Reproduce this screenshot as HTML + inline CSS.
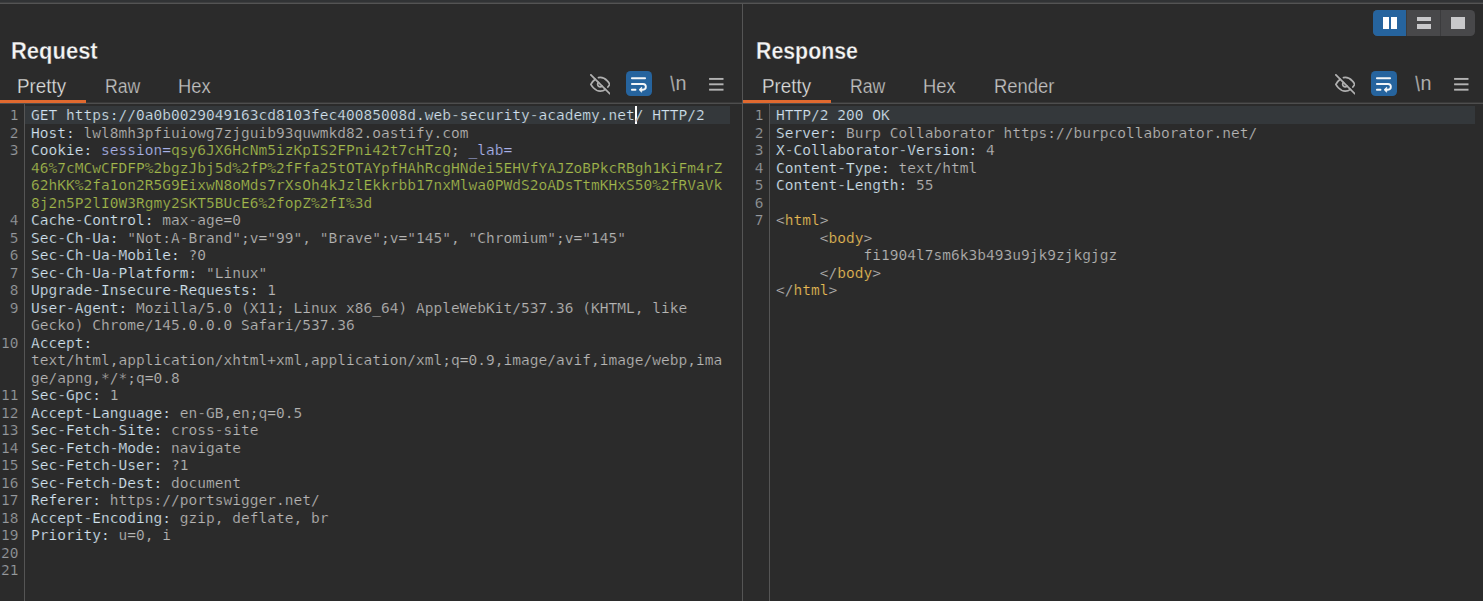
<!DOCTYPE html>
<html lang="en">
<head>
<meta charset="utf-8">
<title>Request / Response</title>
<style>
html,body{margin:0;padding:0;}
body{width:1483px;height:601px;overflow:hidden;background:#2b2b2b;position:relative;}
.abs{position:absolute;}
.sans{font-family:"Liberation Sans", "DejaVu Sans", sans-serif;}
.row,.ln{position:absolute;font-family:"DejaVu Sans Mono", "Liberation Mono", monospace;font-size:14.5px;line-height:17.5px;height:17.5px;white-space:pre;letter-spacing:0.0203px;-webkit-text-stroke:0.22px #2b2b2b;}
.ln{width:40px;text-align:right;color:#979a9e;}
.u{-webkit-text-stroke:0;}
.n{color:#d2e2ef;}
.v{color:#b7b6b5;}
.p{color:#a9b2e8;}
.g{color:#a2b84c;}
.t{color:#e8bb55;}
.title{font-weight:bold;font-size:23px;line-height:26px;color:#f4f4f4;top:38.4px;transform-origin:0 0;transform:scaleX(0.955);-webkit-text-stroke:0.3px #2b2b2b;}
.tab{font-size:19.5px;line-height:24px;color:#c2c2c2;top:73.6px;transform-origin:0 0;-webkit-text-stroke:0.25px #2b2b2b;}
.tab.sel{color:#dedede;}
</style>
</head>
<body>
<!-- top strip -->
<div class="abs" style="left:0;top:0;width:1483px;height:2px;background:#313335"></div>
<div class="abs" style="left:0;top:2px;width:1483px;height:1px;background:#3e3f40"></div>
<div class="abs" style="left:0;top:3px;width:1483px;height:1px;background:#545454"></div>
<!-- pane divider -->
<div class="abs" style="left:742px;top:3px;width:1px;height:598px;background:#555555"></div>

<!-- layout switcher -->
<div class="abs" style="left:1373px;top:10px;width:101.5px;height:26px;border-radius:4.5px;background:#48484a;overflow:hidden">
  <div class="abs" style="left:0;top:0;width:33px;height:26px;background:#26649e"></div>
  <div class="abs" style="left:33px;top:0;width:1.1px;height:26px;background:#3b3b3d"></div>
  <div class="abs" style="left:66.7px;top:0;width:1.1px;height:26px;background:#3b3b3d"></div>
  <div class="abs" style="left:9.9px;top:6.6px;width:5.9px;height:12.1px;background:#ffffff"></div>
  <div class="abs" style="left:18.4px;top:6.6px;width:5.8px;height:12.1px;background:#ffffff"></div>
  <div class="abs" style="left:43.8px;top:6.9px;width:14.2px;height:4.2px;background:#c8c8ca"></div>
  <div class="abs" style="left:43.8px;top:14.3px;width:14.2px;height:4.4px;background:#c8c8ca"></div>
  <div class="abs" style="left:77.8px;top:6.7px;width:14px;height:12px;background:#c8c8ca"></div>
</div>

<!-- REQUEST pane -->
<div class="abs sans title" style="left:11px">Request</div>
<div class="abs sans tab sel" style="left:17px;transform:scaleX(0.965)">Pretty</div>
<div class="abs sans tab" style="left:105px;transform:scaleX(0.905)">Raw</div>
<div class="abs sans tab" style="left:178px;transform:scaleX(0.94)">Hex</div>
<div class="abs" style="left:0;top:100px;width:86px;height:3px;background:#e0692f"></div>

<svg class="abs" style="left:589.7px;top:74.2px" width="20.6" height="20.6" viewBox="0 0 24 24" fill="none" stroke="#b0b0b0" stroke-width="2.05" stroke-linecap="round" stroke-linejoin="round">
  <path d="M17.94 17.94A10.07 10.07 0 0 1 12 20c-7 0-11-8-11-8a18.45 18.45 0 0 1 5.06-5.94M9.9 4.24A9.12 9.12 0 0 1 12 4c7 0 11 8 11 8a18.5 18.5 0 0 1-2.16 3.19m-6.72-1.07a3 3 0 1 1-4.24-4.24"/>
  <path d="M1 1 L23 23"/>
</svg>
<div class="abs" style="left:626px;top:71px;width:26px;height:25px;border-radius:4.5px;background:#26649e"></div>
<svg class="abs" style="left:626px;top:71px" width="26" height="25" viewBox="626 71 26 25" fill="none" stroke="#f4f6f8" stroke-width="1.9" stroke-linecap="round" stroke-linejoin="round">
  <path d="M631.9 78.3 H645.1"/>
  <path d="M631.9 84 H643 A2.85 2.85 0 0 1 643 89.7 H641"/>
  <path d="M631.9 89.7 H635.5"/>
  <path d="M641.4 87.5 L639.1 89.7 L641.4 91.9 Z" fill="#f4f6f8" stroke-width="0.9"/>
</svg>
<svg class="abs sans" style="left:666px;top:70px" width="26" height="28" viewBox="666 70 26 28">
  <text transform="translate(670.4 90.6) scale(0.74 1)" font-size="19.9" fill="#adadad" stroke="#adadad" stroke-width="0.5">\</text>
  <text transform="translate(675.6 90.1) scale(0.97 1)" font-size="20.4" fill="#adadad">n</text>
</svg>
<svg class="abs" style="left:706px;top:74px" width="22" height="20" viewBox="706 74 22 20" fill="#b3b3b3">
  <rect x="709.1" y="77.95" width="14.4" height="1.9"/>
  <rect x="709.1" y="83.35" width="14.4" height="1.9"/>
  <rect x="709.1" y="88.75" width="14.4" height="1.9"/>
</svg>

<div class="abs" style="left:86px;top:102px;width:656px;height:1px;background:#393939"></div>
<div class="abs" style="left:0;top:103px;width:742px;height:1px;background:#4e4e4e"></div>
<div class="abs" style="left:24px;top:104px;width:1px;height:497px;background:#555555"></div>
<div class="abs" style="left:25px;top:106px;width:704.5px;height:18px;background:#34383b"></div>
<div class="abs" style="left:635px;top:106px;width:2px;height:18px;background:#ffffff"></div>
<div class="ln" style="top:107px;left:-21.5px">1</div>
<div class="row" style="top:107px;left:31px"><span class="n">GET https://0a0b0029049163cd8103fec40085008d.web-security-academy.net/ HTTP/2</span></div>
<div class="ln" style="top:124.5px;left:-21.5px">2</div>
<div class="row" style="top:124.5px;left:31px"><span class="n">Host:</span><span class="v"> lwl8mh3pfiuiowg7zjguib93quwmkd82.oastify.com</span></div>
<div class="ln" style="top:142px;left:-21.5px">3</div>
<div class="row" style="top:142px;left:31px"><span class="n">Cookie:</span><span class="v"> </span><span class="p">session=</span><span class="g">qsy6JX6HcNm5izKpIS2FPni42t7cHTzQ</span><span class="v">; </span><span class="p"><span class="u">_</span>lab=</span></div>
<div class="row" style="top:159.5px;left:31px"><span class="g">46%7cMCwCFDFP%2bgzJbj5d%2fP%2fFfa25tOTAYpfHAhRcgHNdei5EHVfYAJZoBPkcRBgh1KiFm4rZ</span></div>
<div class="row" style="top:177px;left:31px"><span class="g">62hKK%2fa1on2R5G9EixwN8oMds7rXsOh4kJzlEkkrbb17nxMlwa0PWdS2oADsTtmKHxS50%2fRVaVk</span></div>
<div class="row" style="top:194.5px;left:31px"><span class="g">8j2n5P2lI0W3Rgmy2SKT5BUcE6%2fopZ%2fI%3d</span></div>
<div class="ln" style="top:212px;left:-21.5px">4</div>
<div class="row" style="top:212px;left:31px"><span class="n">Cache-Control:</span><span class="v"> max-age=0</span></div>
<div class="ln" style="top:229.5px;left:-21.5px">5</div>
<div class="row" style="top:229.5px;left:31px"><span class="n">Sec-Ch-Ua:</span><span class="v"> "Not:A-Brand";v="99", "Brave";v="145", "Chromium";v="145"</span></div>
<div class="ln" style="top:247px;left:-21.5px">6</div>
<div class="row" style="top:247px;left:31px"><span class="n">Sec-Ch-Ua-Mobile:</span><span class="v"> ?0</span></div>
<div class="ln" style="top:264.5px;left:-21.5px">7</div>
<div class="row" style="top:264.5px;left:31px"><span class="n">Sec-Ch-Ua-Platform:</span><span class="v"> "Linux"</span></div>
<div class="ln" style="top:282px;left:-21.5px">8</div>
<div class="row" style="top:282px;left:31px"><span class="n">Upgrade-Insecure-Requests:</span><span class="v"> 1</span></div>
<div class="ln" style="top:299.5px;left:-21.5px">9</div>
<div class="row" style="top:299.5px;left:31px"><span class="n">User-Agent:</span><span class="v"> Mozilla/5.0 (X11; Linux x86<span class="u">_</span>64) AppleWebKit/537.36 (KHTML, like</span></div>
<div class="row" style="top:317px;left:31px"><span class="v">Gecko) Chrome/145.0.0.0 Safari/537.36</span></div>
<div class="ln" style="top:334.5px;left:-21.5px">10</div>
<div class="row" style="top:334.5px;left:31px"><span class="n">Accept:</span></div>
<div class="row" style="top:352px;left:31px"><span class="v">text/html,application/xhtml+xml,application/xml;q=0.9,image/avif,image/webp,ima</span></div>
<div class="row" style="top:369.5px;left:31px"><span class="v">ge/apng,*/*;q=0.8</span></div>
<div class="ln" style="top:387px;left:-21.5px">11</div>
<div class="row" style="top:387px;left:31px"><span class="n">Sec-Gpc:</span><span class="v"> 1</span></div>
<div class="ln" style="top:404.5px;left:-21.5px">12</div>
<div class="row" style="top:404.5px;left:31px"><span class="n">Accept-Language:</span><span class="v"> en-GB,en;q=0.5</span></div>
<div class="ln" style="top:422px;left:-21.5px">13</div>
<div class="row" style="top:422px;left:31px"><span class="n">Sec-Fetch-Site:</span><span class="v"> cross-site</span></div>
<div class="ln" style="top:439.5px;left:-21.5px">14</div>
<div class="row" style="top:439.5px;left:31px"><span class="n">Sec-Fetch-Mode:</span><span class="v"> navigate</span></div>
<div class="ln" style="top:457px;left:-21.5px">15</div>
<div class="row" style="top:457px;left:31px"><span class="n">Sec-Fetch-User:</span><span class="v"> ?1</span></div>
<div class="ln" style="top:474.5px;left:-21.5px">16</div>
<div class="row" style="top:474.5px;left:31px"><span class="n">Sec-Fetch-Dest:</span><span class="v"> document</span></div>
<div class="ln" style="top:492px;left:-21.5px">17</div>
<div class="row" style="top:492px;left:31px"><span class="n">Referer:</span><span class="v"> https://portswigger.net/</span></div>
<div class="ln" style="top:509.5px;left:-21.5px">18</div>
<div class="row" style="top:509.5px;left:31px"><span class="n">Accept-Encoding:</span><span class="v"> gzip, deflate, br</span></div>
<div class="ln" style="top:527px;left:-21.5px">19</div>
<div class="row" style="top:527px;left:31px"><span class="n">Priority:</span><span class="v"> u=0, i</span></div>
<div class="ln" style="top:544.5px;left:-21.5px">20</div>
<div class="ln" style="top:562px;left:-21.5px">21</div>

<!-- RESPONSE pane -->
<div class="abs sans title" style="left:756px;transform:scaleX(0.927)">Response</div>
<div class="abs sans tab sel" style="left:762px;transform:scaleX(0.965)">Pretty</div>
<div class="abs sans tab" style="left:850px;transform:scaleX(0.905)">Raw</div>
<div class="abs sans tab" style="left:923px;transform:scaleX(0.94)">Hex</div>
<div class="abs sans tab" style="left:994px;transform:scaleX(0.945)">Render</div>
<div class="abs" style="left:743px;top:100px;width:88px;height:3px;background:#e0692f"></div>

<svg class="abs" style="left:1334.7px;top:74.2px" width="20.6" height="20.6" viewBox="0 0 24 24" fill="none" stroke="#b0b0b0" stroke-width="2.05" stroke-linecap="round" stroke-linejoin="round">
  <path d="M17.94 17.94A10.07 10.07 0 0 1 12 20c-7 0-11-8-11-8a18.45 18.45 0 0 1 5.06-5.94M9.9 4.24A9.12 9.12 0 0 1 12 4c7 0 11 8 11 8a18.5 18.5 0 0 1-2.16 3.19m-6.72-1.07a3 3 0 1 1-4.24-4.24"/>
  <path d="M1 1 L23 23"/>
</svg>
<div class="abs" style="left:1371px;top:71px;width:26px;height:25px;border-radius:4.5px;background:#26649e"></div>
<svg class="abs" style="left:1371px;top:71px" width="26" height="25" viewBox="626 71 26 25" fill="none" stroke="#f4f6f8" stroke-width="1.9" stroke-linecap="round" stroke-linejoin="round">
  <path d="M631.9 78.3 H645.1"/>
  <path d="M631.9 84 H643 A2.85 2.85 0 0 1 643 89.7 H641"/>
  <path d="M631.9 89.7 H635.5"/>
  <path d="M641.4 87.5 L639.1 89.7 L641.4 91.9 Z" fill="#f4f6f8" stroke-width="0.9"/>
</svg>
<svg class="abs sans" style="left:1411px;top:70px" width="26" height="28" viewBox="666 70 26 28">
  <text transform="translate(670.4 90.6) scale(0.74 1)" font-size="19.9" fill="#adadad" stroke="#adadad" stroke-width="0.5">\</text>
  <text transform="translate(675.6 90.1) scale(0.97 1)" font-size="20.4" fill="#adadad">n</text>
</svg>
<svg class="abs" style="left:1451px;top:74px" width="22" height="20" viewBox="706 74 22 20" fill="#b3b3b3">
  <rect x="709.1" y="77.95" width="14.4" height="1.9"/>
  <rect x="709.1" y="83.35" width="14.4" height="1.9"/>
  <rect x="709.1" y="88.75" width="14.4" height="1.9"/>
</svg>

<div class="abs" style="left:831px;top:102px;width:652px;height:1px;background:#393939"></div>
<div class="abs" style="left:743px;top:103px;width:740px;height:1px;background:#4e4e4e"></div>
<div class="abs" style="left:769px;top:104px;width:1px;height:497px;background:#555555"></div>
<div class="abs" style="left:770px;top:106px;width:704.5px;height:18px;background:#34383b"></div>
<div class="ln" style="top:107px;left:723.5px">1</div>
<div class="row" style="top:107px;left:776px"><span class="n">HTTP/2 200 OK</span></div>
<div class="ln" style="top:124.5px;left:723.5px">2</div>
<div class="row" style="top:124.5px;left:776px"><span class="n">Server:</span><span class="v"> Burp Collaborator https://burpcollaborator.net/</span></div>
<div class="ln" style="top:142px;left:723.5px">3</div>
<div class="row" style="top:142px;left:776px"><span class="n">X-Collaborator-Version:</span><span class="v"> 4</span></div>
<div class="ln" style="top:159.5px;left:723.5px">4</div>
<div class="row" style="top:159.5px;left:776px"><span class="n">Content-Type:</span><span class="v"> text/html</span></div>
<div class="ln" style="top:177px;left:723.5px">5</div>
<div class="row" style="top:177px;left:776px"><span class="n">Content-Length:</span><span class="v"> 55</span></div>
<div class="ln" style="top:194.5px;left:723.5px">6</div>
<div class="ln" style="top:212px;left:723.5px">7</div>
<div class="row" style="top:212px;left:776px"><span class="v">&lt;</span><span class="t">html</span><span class="v">&gt;</span></div>
<div class="row" style="top:229.5px;left:776px"><span class="v">     &lt;</span><span class="t">body</span><span class="v">&gt;</span></div>
<div class="row" style="top:247px;left:776px"><span class="v">          fi1904l7sm6k3b493u9jk9zjkgjgz</span></div>
<div class="row" style="top:264.5px;left:776px"><span class="v">     &lt;/</span><span class="t">body</span><span class="v">&gt;</span></div>
<div class="row" style="top:282px;left:776px"><span class="v">&lt;/</span><span class="t">html</span><span class="v">&gt;</span></div>
</body>
</html>
